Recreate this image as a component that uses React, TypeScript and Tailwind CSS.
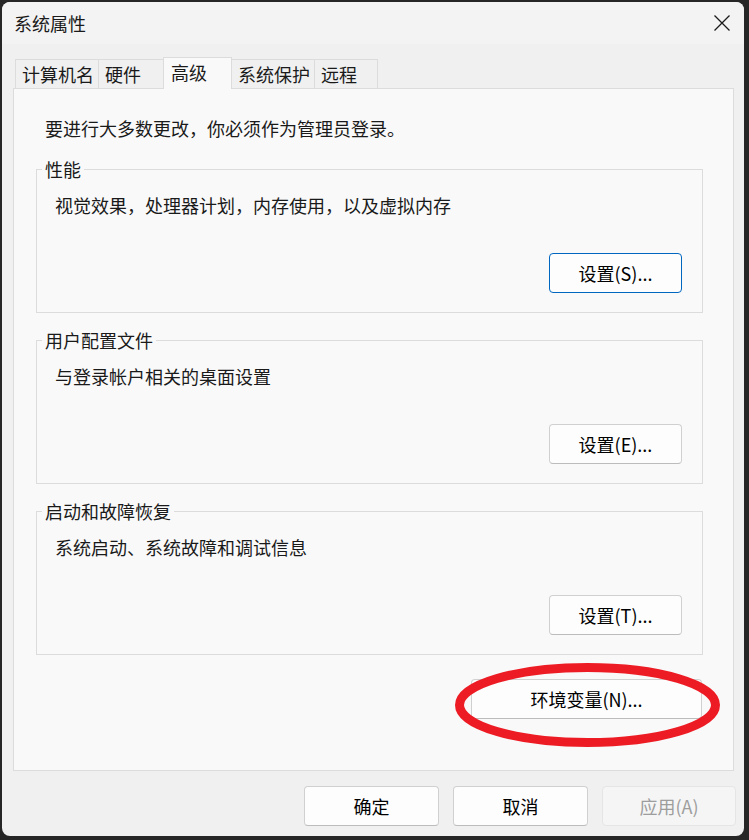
import type { ReactNode } from "react";
import { clsx } from "clsx";

const font = "font-['Microsoft_YaHei_UI','Noto_Sans_CJK_SC',sans-serif]";

const tabs = [
  { name: "计算机名", w: "w-[83px]" },
  { name: "硬件", w: "w-[65px]" },
  { name: "高级", w: "w-[69px]", active: true },
  { name: "系统保护", w: "w-[82px]" },
  { name: "远程", w: "w-[64px]" },
];

const groups = [
  { title: "性能", desc: "视觉效果，处理器计划，内存使用，以及虚拟内存", btn: "设置(S)...", focus: true },
  { title: "用户配置文件", desc: "与登录帐户相关的桌面设置", btn: "设置(E)..." },
  { title: "启动和故障恢复", desc: "系统启动、系统故障和调试信息", btn: "设置(T)..." },
];

function Button({
  children,
  className,
  focus,
  disabled,
}: {
  children: ReactNode;
  className?: string;
  focus?: boolean;
  disabled?: boolean;
}) {
  return (
    <button
      className={clsx(
        "h-[40px] rounded-[4px] border text-[18px] leading-none flex items-center justify-center",
        focus && "border-[#0067c0] bg-[#fdfdfd] text-black",
        !focus && !disabled && "border-[#d0d0d0] border-b-[#bcbcbc] bg-[#fdfdfd] text-black",
        disabled && "border-[#e5e5e5] bg-[#f5f5f5] text-[#9d9d9d]",
        className,
      )}
    >
      {children}
    </button>
  );
}

export default function App() {
  const activeIdx = tabs.findIndex((t) => t.active);

  return (
    <div className={clsx("relative w-[749px] h-[840px] bg-[#262626] pt-[2px] pl-[2px]", font)}>
      <div className="w-[742px] h-[834px] rounded-lg overflow-hidden bg-[#f0f0f0] flex flex-col text-[#1a1a1a]">
        {/* title bar */}
        <div className="h-[42px] bg-[#f3f3f3] flex items-center justify-between pl-[12px] pr-[14px]">
          <span className="text-[18px] leading-none">系统属性</span>
          <svg width="16" height="16" viewBox="0 0 16 16" className="text-[#1a1a1a]">
            <path d="M0.5 0.5 L15.5 15.5 M15.5 0.5 L0.5 15.5" stroke="currentColor" strokeWidth="1.3" />
          </svg>
        </div>

        <div className="pl-[11px] pt-[13px]">
          {/* tabs */}
          <div className="flex items-end h-[31px] pl-[2px]">
            {tabs.map((t, i) => (
              <div
                key={t.name}
                className={clsx(
                  "border-t border-[#dcdcdc] text-[18px] leading-none flex items-center",
                  t.w,
                  i !== activeIdx + 1 && "border-l",
                  (t.active || i === tabs.length - 1) && "border-r",
                  t.active
                    ? "h-[32px] mb-[-1px] bg-[#f9f9f9] relative z-10 pl-[7px] pb-[4px]"
                    : "h-[29px] bg-[#f0f0f0] pl-[6px]",
                )}
              >
                {t.name}
              </div>
            ))}
          </div>

          {/* panel */}
          <div className="w-[721px] h-[683px] border border-[#dcdcdc] bg-[#f9f9f9] pl-[22px] pr-[30px]">
            <p className="pt-[27px] pl-[9px] text-[18px] leading-[24px]">要进行大多数更改，你必须作为管理员登录。</p>

            <div className="mt-[17px] flex flex-col gap-[15px]">
              {groups.map((g) => (
                <fieldset key={g.title} className="border border-[#dcdcdc] m-0 p-0">
                  <legend className="ml-[5px] px-[3px] text-[18px] leading-[24px]">{g.title}</legend>
                  <p className="pt-[12px] pl-[18px] text-[18px] leading-[24px]">{g.desc}</p>
                  <div className="flex justify-end mt-[36px] pr-[20px] pb-[19px]">
                    <Button className="w-[133px]" focus={g.focus}>
                      {g.btn}
                    </Button>
                  </div>
                </fieldset>
              ))}
            </div>

            <div className="flex justify-end mt-[24px] pr-px">
              <Button className="w-[231px] h-[39px]">环境变量(N)...</Button>
            </div>
          </div>
        </div>

        {/* dialog buttons */}
        <div className="flex justify-end gap-[14px] mt-[15px] pr-[8px]">
          <Button className="w-[135px] h-[39px]">确定</Button>
          <Button className="w-[135px] h-[39px]">取消</Button>
          <Button className="w-[134px] h-[39px]" disabled>
            应用(A)
          </Button>
        </div>
      </div>

      {/* red annotation ring */}
      <svg className="absolute left-0 top-0 pointer-events-none" width="749" height="840">
        <ellipse cx="587.5" cy="705" rx="128" ry="37.5" fill="none" stroke="#ed1c24" strokeWidth="9" />
      </svg>
    </div>
  );
}
